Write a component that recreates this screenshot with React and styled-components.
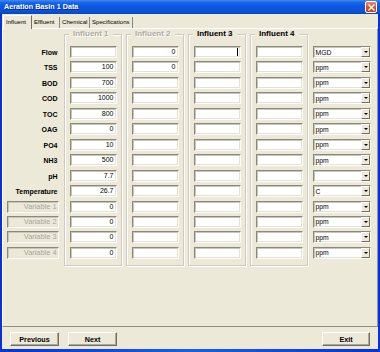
import React from "react";
import styled, { createGlobalStyle } from "styled-components";

const GlobalStyle = createGlobalStyle`
  html, body { margin: 0; padding: 0; background: #0a52dc; }
  body {
    width: 380px; height: 352px; overflow: hidden;
    font-family: "Liberation Sans", Arial, sans-serif;
  }
  * { box-sizing: border-box; }
`;

const Window = styled.div`
  width: 380px;
  height: 352px;
  display: flex;
  flex-direction: column;
  background: linear-gradient(90deg, #0831d9 0%, #1660e8 50%, #0831d9 100%);
`;

const TitleBar = styled.div`
  height: 14px;
  flex: none;
  display: flex;
  align-items: center;
  justify-content: space-between;
  padding: 0 3px 0 4px;
  background: linear-gradient(180deg, #3d8cf5 0%, #1a66e6 18%, #0b58e0 45%, #0a52d6 80%, #0846c0 100%);
`;

const Title = styled.span`
  color: #fff;
  font-weight: bold;
  font-size: 7.2px;
  line-height: 14px;
  text-shadow: 1px 1px 0 #0a2a8a;
  white-space: nowrap;
`;

const CloseButton = styled.div`
  width: 12px;
  height: 12px;
  border: 1px solid #fff;
  border-radius: 2px;
  background: linear-gradient(180deg, #e98a6c 0%, #d9552c 50%, #c7400f 100%);
  display: flex;
  align-items: center;
  justify-content: center;
`;

const Body = styled.div`
  flex: 1;
  margin: 0 2px 3px 2px;
  background: #ece9d8;
  display: flex;
  flex-direction: column;
`;

const TabStrip = styled.div`
  height: 14px;
  flex: none;
  display: flex;
  align-items: flex-end;
  padding-left: 1px;
`;

const Tab = styled.div`
  position: relative;
  z-index: ${(p) => (p.$active ? 1 : 0)};
  width: ${(p) => p.$w}px;
  height: ${(p) => (p.$active ? 14 : 11)}px;
  margin-bottom: ${(p) => (p.$active ? -1 : 0)}px;
  padding-left: 2px;
  font-size: 6.1px;
  line-height: ${(p) => (p.$active ? 12 : 10)}px;
  color: #000;
  white-space: nowrap;
  background: #ece9d8;
  border-top: ${(p) => (p.$active ? "1px solid #fff" : "none")};
  border-left: ${(p) => (p.$active ? "1px solid #fff" : "none")};
  border-right: 1px solid ${(p) => (p.$active ? "#716f64" : "#8a887c")};
`;

const Pane = styled.div`
  height: 299px;
  flex: none;
  border-top: 1px solid #fff;
  border-left: 1px solid #fff;
  border-right: 1px solid #919b9c;
  border-bottom: 1px solid #8f8d82;
  display: flex;
  align-items: flex-start;
  padding: 5px 0 0 4px;
`;

const Column = styled.div`
  width: ${(p) => p.$w}px;
  margin-left: ${(p) => p.$ml || 0}px;
  padding-top: 12px;
  display: flex;
  flex-direction: column;
  gap: 3.46px;
`;

const RowLabel = styled.div`
  height: 12px;
  padding-right: 1.5px;
  text-align: right;
  font-weight: bold;
  font-size: 7px;
  line-height: 14px;
  color: #000;
  white-space: nowrap;
`;

const sunken = `
  border: 1px solid;
  border-color: #8b897d #fdfdfb #fdfdfb #8b897d;
  box-shadow: inset 1px 1px 0 #c9c6b8, inset -1px -1px 0 #e6e3d6;
`;

const VarLabel = styled.div`
  height: 12px;
  ${sunken}
  background: #ece9d8;
  color: #a7a59a;
  font-size: 7.4px;
  line-height: 10px;
  text-align: right;
  padding-right: 1.5px;
  white-space: nowrap;
`;

const Frames = styled.div`
  display: flex;
  gap: 4px;
  margin-left: 5px;
`;

const Frame = styled.div`
  position: relative;
  width: 58px;
  height: 232px;
  border: 1px solid #cfccbd;
  box-shadow: inset 1px 1px 0 #fff, 1px 1px 0 #fff;
  padding: 11px 4px 0 5px;
  display: flex;
  flex-direction: column;
  gap: 3.46px;
`;

const Legend = styled.span`
  position: absolute;
  top: -6px;
  left: 4px;
  padding: 0 4px;
  background: #ece9d8;
  font-weight: bold;
  font-size: 8px;
  line-height: 10px;
  white-space: nowrap;
  color: ${(p) => (p.$disabled ? "#aeab9d" : "#000")};
  text-shadow: ${(p) => (p.$disabled ? "1px 1px 0 #fff" : "none")};
`;

const Field = styled.div`
  height: 12px;
  width: 47px;
  ${sunken}
  background: #fff;
  display: flex;
  align-items: center;
  justify-content: flex-end;
  padding-right: 2.5px;
  font-size: 7px;
  color: #000;
  line-height: 10px;
`;

const Caret = styled.span`
  width: 1px;
  height: 8px;
  background: #000;
  margin-right: -0.5px;
`;

const Select = styled.div`
  height: 12px;
  ${sunken}
  background: #fff;
  display: flex;
  align-items: center;
  justify-content: space-between;
  padding-left: 1.5px;
  font-size: 6.8px;
  color: #000;
`;

const DropButton = styled.div`
  width: 9px;
  height: 10px;
  background: #ece9d8;
  border: 1px solid;
  border-color: #fff #716f64 #716f64 #fff;
  display: flex;
  align-items: center;
  justify-content: center;
  &::after {
    content: "";
    border-left: 2px solid transparent;
    border-right: 2px solid transparent;
    border-top: 2.5px solid #000;
  }
`;

const ButtonBar = styled.div`
  flex: 1;
  display: flex;
  align-items: flex-start;
  gap: 9px;
  padding: 5px 8px 0 8px;
`;

const Button = styled.div`
  width: ${(p) => p.$w}px;
  height: 14px;
  margin-left: ${(p) => (p.$right ? "auto" : "0")};
  background: #ece9d8;
  border: 1px solid;
  border-color: #fff #716f64 #716f64 #fff;
  box-shadow: inset -1px -1px 0 #aca899;
  display: flex;
  align-items: center;
  justify-content: center;
  font-weight: bold;
  font-size: 7.2px;
  color: #000;
`;

const rows = [
  { label: "Flow", v: ["", "0", "", ""], unit: "MGD" },
  { label: "TSS", v: ["100", "0", "", ""], unit: "ppm" },
  { label: "BOD", v: ["700", "", "", ""], unit: "ppm" },
  { label: "COD", v: ["1000", "", "", ""], unit: "ppm" },
  { label: "TOC", v: ["800", "", "", ""], unit: "ppm" },
  { label: "OAG", v: ["0", "", "", ""], unit: "ppm" },
  { label: "PO4", v: ["10", "", "", ""], unit: "ppm" },
  { label: "NH3", v: ["500", "", "", ""], unit: "ppm" },
  { label: "pH", v: ["7.7", "", "", ""], unit: "" },
  { label: "Temperature", v: ["26.7", "", "", ""], unit: "C" },
  { label: "Variable 1", v: ["0", "", "", ""], unit: "ppm", variable: true },
  { label: "Variable 2", v: ["0", "", "", ""], unit: "ppm", variable: true },
  { label: "Variable 3", v: ["0", "", "", ""], unit: "ppm", variable: true },
  { label: "Variable 4", v: ["0", "", "", ""], unit: "ppm", variable: true },
];

const frames = [
  { name: "Influent 1", disabled: true },
  { name: "Influent 2", disabled: true },
  { name: "Influent 3", disabled: false },
  { name: "Influent 4", disabled: false },
];

const tabs = [
  { name: "Influent", w: 29, active: true },
  { name: "Effluent", w: 28 },
  { name: "Chemical", w: 30 },
  { name: "Specifications", w: 43 },
];

export default function App() {
  return (
    <>
      <GlobalStyle />
      <Window>
        <TitleBar>
          <Title>Aeration Basin 1 Data</Title>
          <CloseButton>
            <svg width="7" height="7" viewBox="0 0 7 7">
              <path d="M1 1 L6 6 M6 1 L1 6" stroke="#fff" strokeWidth="1.4" strokeLinecap="square" />
            </svg>
          </CloseButton>
        </TitleBar>
        <Body>
          <TabStrip>
            {tabs.map((t) => (
              <Tab key={t.name} $w={t.w} $active={t.active}>
                {t.name}
              </Tab>
            ))}
          </TabStrip>
          <Pane>
            <Column $w={52}>
              {rows.map((r) =>
                r.variable ? (
                  <VarLabel key={r.label}>{r.label}</VarLabel>
                ) : (
                  <RowLabel key={r.label}>{r.label}</RowLabel>
                )
              )}
            </Column>
            <Frames>
              {frames.map((f, fi) => (
                <Frame key={f.name}>
                  <Legend $disabled={f.disabled}>{f.name}</Legend>
                  {rows.map((r, ri) => (
                    <Field key={r.label}>
                      {r.v[fi]}
                      {fi === 2 && ri === 0 ? <Caret /> : null}
                    </Field>
                  ))}
                </Frame>
              ))}
            </Frames>
            <Column $w={58} $ml={5}>
              {rows.map((r) => (
                <Select key={r.label}>
                  <span>{r.unit}</span>
                  <DropButton />
                </Select>
              ))}
            </Column>
          </Pane>
          <ButtonBar>
            <Button $w={49}>Previous</Button>
            <Button $w={49}>Next</Button>
            <Button $w={48} $right>Exit</Button>
          </ButtonBar>
        </Body>
      </Window>
    </>
  );
}
